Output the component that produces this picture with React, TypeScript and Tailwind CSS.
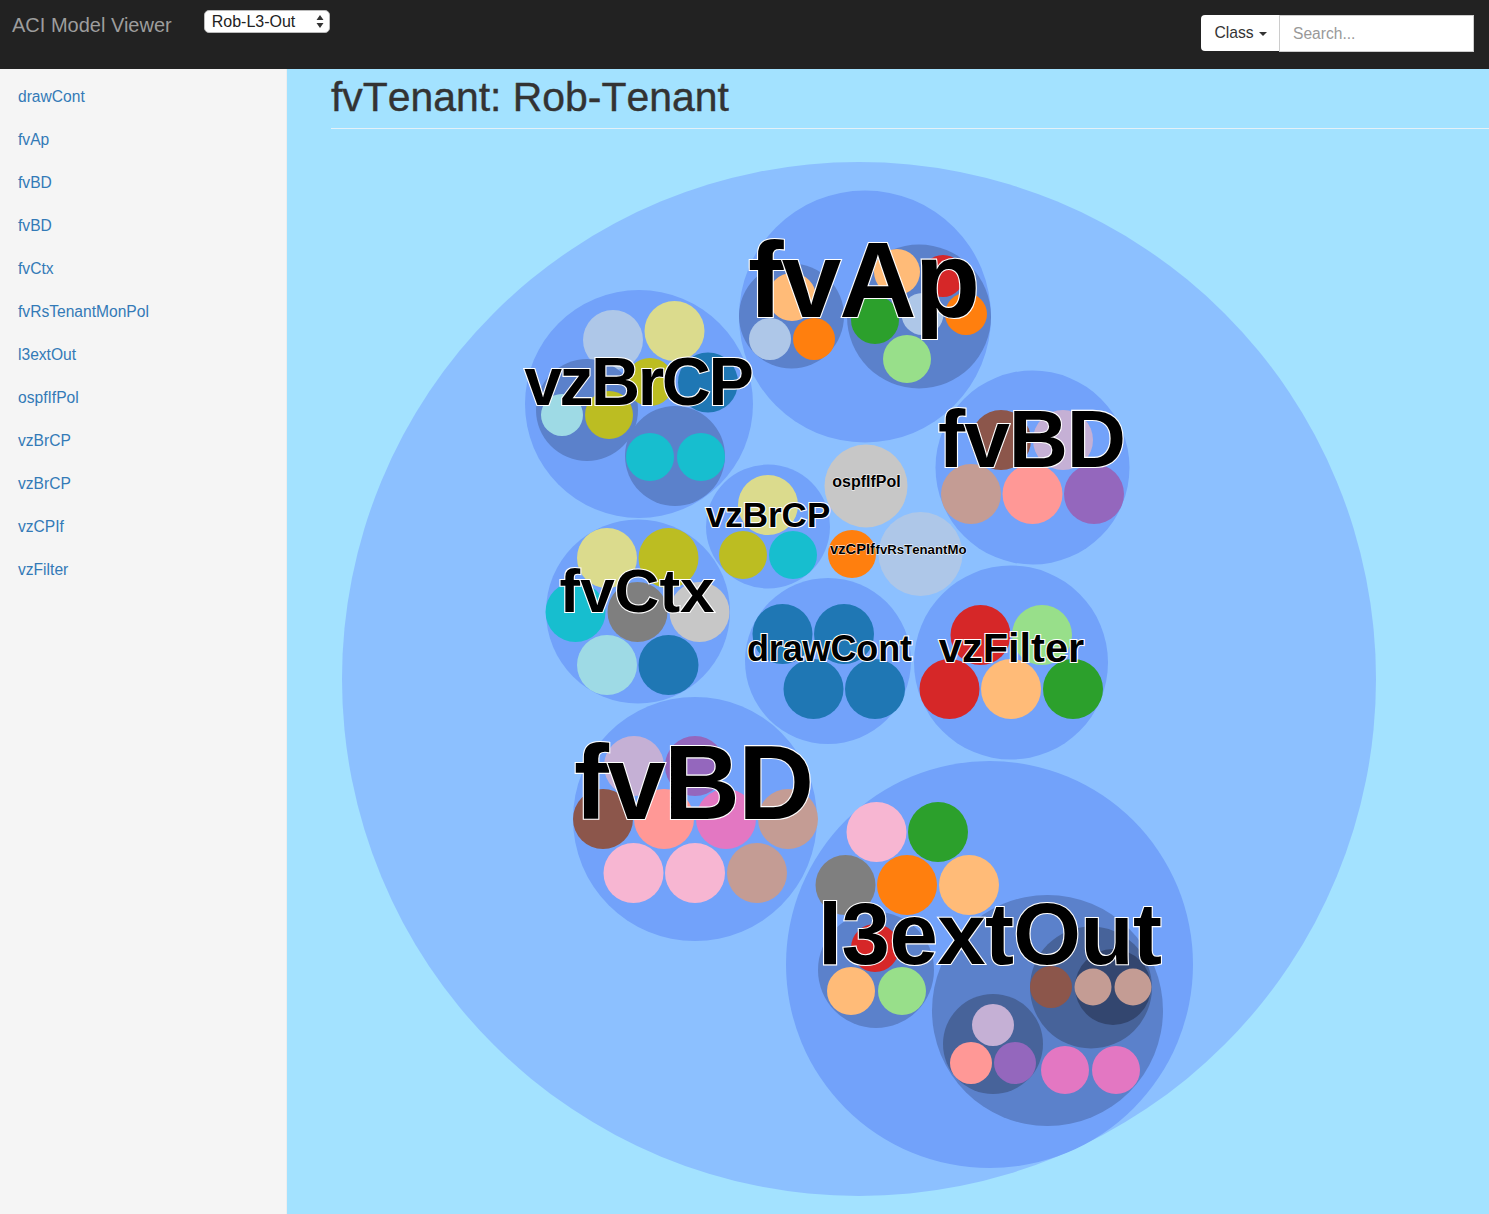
import React from "react";

const D1 = "#8cc0ff", D2 = "#72a2fa", D3 = "#5b81cb", D4 = "#47639a", D5 = "#33466f";
const blue = "#1f77b4", lblue = "#aec7e8", orange = "#ff7f0e", lorange = "#ffbb78", green = "#2ca02c", lgreen = "#98df8a",
  red = "#d62728", salmon = "#ff9896", purple = "#9467bd", thistle = "#c5b0d5", brown = "#8c564b", tan = "#c49c94",
  orchid = "#e377c2", pink = "#f7b6d2", gray = "#7f7f7f", lgray = "#c7c7c7", olive = "#bcbd22", khaki = "#dbdb8d",
  cyan = "#17becf", lcyan = "#9edae5";

const circles: [number, number, number, string][] = [
  [859, 679, 517, D1],
  // fvAp
  [865, 316.5, 126, D2],
  [791.5, 316, 52.5, D3],
  [792, 297, 24, lorange],
  [770, 339, 21, lblue],
  [814, 339, 21, orange],
  [919, 316.5, 72, D3],
  [897, 272, 23, lorange],
  [966, 314, 21, orange],
  [943, 276, 21, red],
  [922.5, 314, 21, lblue],
  [875, 320, 24, green],
  [907, 359, 24, lgreen],
  // vzBrCP big
  [639, 404, 114, D2],
  [613, 340, 30, lblue],
  [674.5, 331, 30, khaki],
  [587, 410, 51, D3],
  [650, 382, 24, olive],
  [708, 382.5, 30, blue],
  [562, 415, 21, lcyan],
  [609, 415, 24, olive],
  [675, 456, 50, D3],
  [650, 457, 24, cyan],
  [701, 457, 24, cyan],
  // fvBD right
  [1032.5, 467.5, 97, D2],
  [1001, 440, 30, brown],
  [1063, 440, 30, thistle],
  [971, 494, 30, tan],
  [1032.5, 494, 30, salmon],
  [1094, 494, 30, purple],
  // leaves
  [866, 486, 41.5, lgray],
  [920.5, 554, 42, lblue],
  [852, 554, 24, orange],
  // vzBrCP small
  [768, 526.5, 62, D2],
  [768, 505, 30, khaki],
  [743, 555, 24, olive],
  [793, 555, 24, cyan],
  // fvCtx
  [638, 611.5, 92, D2],
  [607, 558, 30, khaki],
  [668.5, 558, 30, olive],
  [575.5, 612, 30, cyan],
  [637.5, 612, 30, gray],
  [699.5, 612, 30, lgray],
  [607, 665, 30, lcyan],
  [668.5, 665, 30, blue],
  // drawCont
  [828, 661, 83, D2],
  [782.5, 634, 30, blue],
  [844, 634, 30, blue],
  [813.5, 689, 30, blue],
  [875, 689, 30, blue],
  // vzFilter
  [1011, 662.5, 97, D2],
  [980.5, 635, 30, red],
  [1042, 635, 30, lgreen],
  [949.5, 689, 30, red],
  [1011, 689, 30, lorange],
  [1073, 689, 30, green],
  // fvBD lower
  [695, 819, 122, D2],
  [634, 766, 30, thistle],
  [695, 766, 30, purple],
  [603, 819, 30, brown],
  [664, 819, 30, salmon],
  [726, 819, 30, orchid],
  [788, 819, 30, tan],
  [633.5, 873, 30, pink],
  [695, 873, 30, pink],
  [757, 873, 30, tan],
  // l3extOut
  [989.5, 964.5, 203.5, D2],
  [876.5, 832, 30, pink],
  [938, 832, 30, green],
  [845.5, 885, 30, gray],
  [907, 885, 30, orange],
  [969, 885, 30, lorange],
  [876, 970, 58, D3],
  [875, 948, 24, red],
  [851, 991, 24, lorange],
  [902, 991, 24, lgreen],
  [1047.5, 1010.5, 115.5, D3],
  [993, 1044, 50, D4],
  [993, 1025, 21, thistle],
  [971, 1063, 21, salmon],
  [1015, 1063, 21, purple],
  [1065, 1070, 24, orchid],
  [1116, 1070, 24, orchid],
  [1091, 987.5, 61, D4],
  [1113, 987, 38, D5],
  [1051, 987, 21, brown],
  [1093, 987, 18.5, tan],
  [1133, 987, 18.5, tan],
];

// text, x, y, font size, total advance
const labels: [string, number, number, number, number][] = [
  ["fvAp", 864, 317, 107, 232],
  ["vzBrCP", 639, 405, 68, 229.6],
  ["fvBD", 1032, 467, 82, 188],
  ["ospfIfPol", 866.5, 487, 16, 68.4],
  ["vzBrCP", 768, 527, 35, 124.5],
  ["vzCPIf", 852.5, 554, 14.7, 44.9],
  ["fvRsTenantMo", 921, 554, 13.2, 91],
  ["fvCtx", 637, 612, 62, 155],
  ["drawCont", 829.5, 661, 36, 165],
  ["vzFilter", 1011.5, 662, 41.5, 145.3],
  ["fvBD", 694, 819, 105, 240],
  ["l3extOut", 990, 964, 87, 344],
];

const items = [
  "drawCont", "fvAp", "fvBD", "fvBD", "fvCtx", "fvRsTenantMonPol",
  "l3extOut", "ospfIfPol", "vzBrCP", "vzBrCP", "vzCPIf", "vzFilter",
];

export default function App() {
  return (
    <div className="flex h-[1214px] w-full flex-col overflow-hidden font-['Liberation_Sans',Arial,sans-serif] text-[16px]">
      <nav className="flex h-[69px] shrink-0 items-start bg-[#222222]">
        <a className="ml-3 mt-[13px] text-[20px] leading-6 text-[#9d9d9d]">ACI Model Viewer</a>
        <div className="relative ml-[32px] mt-[10px]">
          <select
            defaultValue="Rob-L3-Out"
            className="block h-[23px] w-[126px] appearance-none rounded-[5px] border border-[#bbbbbb] bg-white pl-[7px] text-[16px] leading-none text-[#222222]"
          >
            <option>Rob-L3-Out</option>
          </select>
          <svg className="absolute right-[4px] top-[4px]" width="12" height="15" viewBox="0 0 12 15">
            <path d="M6 1 L9.5 6 H2.5 Z M6 14 L2.5 9 H9.5 Z" fill="#333333" />
          </svg>
        </div>
        <div className="ml-auto mr-[15px] mt-[15px] flex items-start">
          <button className="flex h-9 w-[78px] items-center justify-center gap-[5px] rounded-l-[4px] bg-white pl-[1px] text-[15.7px] text-[#333333]">
            Class
            <span className="mt-[2px] h-0 w-0 border-x-4 border-t-4 border-x-transparent border-t-[#333333]" />
          </button>
          <input
            placeholder="Search..."
            className="h-[37px] w-[195px] border border-[#cccccc] bg-white px-[13px] text-[15.6px] outline-none placeholder:text-[#999999]"
          />
        </div>
      </nav>
      <div className="flex min-h-0 flex-1">
        <aside className="w-[287px] shrink-0 border-r border-[#eeeeee] bg-[#f5f5f5] pt-[6px]">
          <ul>
            {items.map((t, i) => (
              <li key={i} className="flex h-[43px] items-center pl-[18px] text-[15.6px] text-[#337ab7]">
                {t}
              </li>
            ))}
          </ul>
        </aside>
        <main className="flex min-w-0 flex-1 flex-col bg-[#a3e2ff] pl-[44px]">
          <h1 className="h-[60px] shrink-0 border-b border-[#e4f1f8] pt-[4px] text-[40.9px] font-normal leading-[48px] text-[#333333] [font-kerning:none] [-webkit-text-stroke:0.4px_#333333]">
            fvTenant: Rob-Tenant
          </h1>
          <svg className="block shrink-0" width="1158" height="1085" viewBox="331 129 1158 1085">
            {circles.map(([cx, cy, r, fill], i) => (
              <circle key={i} cx={cx} cy={cy} r={r} fill={fill} />
            ))}
            {labels.map(([t, x, y, s, w], i) => (
              <text
                key={i}
                x={x}
                y={y}
                fontSize={s}
                fontWeight="700"
                textAnchor="middle"
                textLength={w}
                lengthAdjust="spacing"
                fill="#000000"
                stroke="#ffffff"
                strokeWidth={s > 20 ? 2.2 : 0.8}
                paintOrder="stroke"
                fontFamily="'Liberation Sans', Arial, sans-serif"
                style={{ fontKerning: "none" }}
              >
                {t}
              </text>
            ))}
          </svg>
        </main>
      </div>
    </div>
  );
}
